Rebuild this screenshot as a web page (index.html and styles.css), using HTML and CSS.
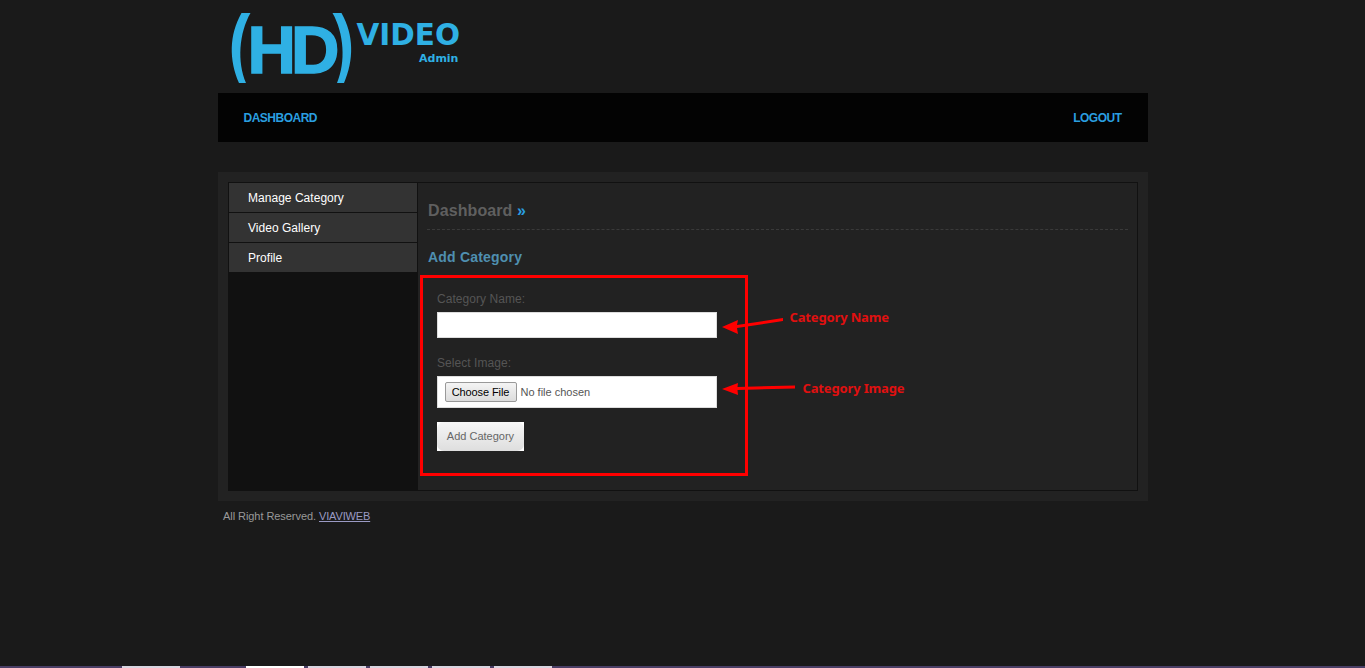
FILE: index.html
```html
<!DOCTYPE html>
<html lang="en">
<head>
  <meta charset="UTF-8">
  <title>Add Category</title>
  <meta name="viewport" content="width=device-width, initial-scale=1.0">
  <link rel="stylesheet" href="styles.css">
</head>
<body>

<div class="container">
  <div class="header">
    <svg class="logo" width="260" height="93" viewBox="0 0 260 93">
      <path d="M23.5 13H32.5C21 33 19 62 28 83H21C11 60 11 35 23.5 13Z"/>
      <path d="M123.500 13H114.500C126 33 128 62 119 83H126C136 60 136 35 123.500 13Z"/>
      <text class="logo-hd" x="29.500" y="73">HD</text>
      <text class="logo-video" x="138.500" y="44.500">VIDEO</text>
      <text class="logo-admin" x="201" y="62">Admin</text>
    </svg>
  </div>

  <div class="nav">
    <a href="#">DASHBOARD</a>
    <a href="#">LOGOUT</a>
  </div>

  <div class="main">
    <div class="inner">
      <ul class="sidebar">
        <li><a href="#">Manage Category</a></li>
        <li><a href="#">Video Gallery</a></li>
        <li><a href="#">Profile</a></li>
      </ul>

      <div class="content">
        <h2>Dashboard <span>»</span></h2>
        <h3>Add Category</h3>

        <form class="form">
          <label for="catName">Category Name:</label>
          <input type="text" id="catName" class="field">

          <label for="catImage" class="second">Select Image:</label>
          <div class="field file-field">
            <input type="file" id="catImage">
          </div>

          <button type="button" class="submit"><span>Add Category</span></button>

          <!-- annotations drawn over the form -->
          <svg class="arrows" width="90" height="80" viewBox="0 0 90 80">
            <path d="M0 11L16 4L15 9L61 2V5L15 12L16 18Z"/>
            <path d="M0 73L16 67L15.500 71L73 69.500V72.500L15.500 74L16 79Z"/>
          </svg>
          <span class="note note-name">Category Name</span>
          <span class="note note-image">Category Image</span>
        </form>
      </div>
    </div>
  </div>

  <p class="footer">All Right Reserved. <a href="#">VIAVIWEB</a></p>
</div>

<div class="taskbar">
  <span class="tab tab1"></span>
  <span class="tab tab2"></span>
  <span class="tab tab3"></span>
  <span class="tab tab4"></span>
  <span class="tab tab5"></span>
  <span class="tab tab6"></span>
</div>

</body>
</html>
```

FILE: styles.css
```css
* {
  box-sizing: border-box;
  font-family: "Liberation Sans", Arial, sans-serif;
}
html, body {
  height: 100%;
}
body {
  margin: 0;
  padding: 0;
  background: #1a1a1a;
  display: flex;
  flex-direction: column;
}
.container {
  width: 930px;
  margin: 0 auto;
  flex: 1;
}
.header {
  height: 93px;
}
.logo {
  display: block;
  fill: #2fb0e4;
}
.logo-hd {
  font-size: 67px;
  font-weight: bold;
  letter-spacing: -5px;
  stroke: #2fb0e4;
  stroke-width: 1.500px;
}
.logo-video {
  font-family: "DejaVu Sans", sans-serif;
  font-size: 29.500px;
  font-weight: bold;
}
.logo-admin {
  font-family: "DejaVu Sans", sans-serif;
  font-size: 11px;
  font-weight: bold;
}
.nav {
  height: 49px;
  background: #030303;
  padding: 0 26px;
  display: flex;
  justify-content: space-between;
  align-items: center;
}
.nav a {
  color: #2a9fe0;
  font-size: 12px;
  font-weight: bold;
  letter-spacing: -0.5px;
  text-decoration: none;
}
.main {
  margin-top: 30px;
  background: #222;
  padding: 10px;
}
.inner {
  display: flex;
  height: 309px;
  border: 1px solid #111;
}
.sidebar {
  width: 189px;
  margin: 0;
  padding: 0;
  list-style: none;
  background: #111;
  border-right: 1px solid #111;
}
.sidebar li {
  height: 30px;
  background: #333;
  border-bottom: 1px solid #111;
}
.sidebar li:last-child {
  height: 29px;
  border-bottom: none;
}
.sidebar a {
  display: block;
  padding-left: 19.500px;
  line-height: 30px;
  color: #fff;
  font-size: 12px;
  letter-spacing: 0.03px;
  text-decoration: none;
}
.content {
  flex: 1;
  padding: 0 9px;
  background: #222;
}
.content h2 {
  margin: 0;
  height: 47px;
  padding: 19px 0 0 1.500px;
  border-bottom: 1px dashed #3a3a3a;
  color: #5f5f5f;
  font-size: 16px;
  letter-spacing: 0.1px;
  line-height: 18px;
}
.content h2 span {
  color: #2a9fe0;
}
.content h3 {
  margin: 19px 0 10px 1.500px;
  color: #4f8fb0;
  font-size: 14px;
  letter-spacing: 0.2px;
  line-height: 16px;
}
.form {
  position: relative;
  width: 328px;
  height: 201px;
  margin-left: -7px;
  padding: 13px 14px 0;
  border: 3px solid #f00;
}
.form label {
  display: block;
  height: 21px;
  padding-left: 0.500px;
  color: #555;
  font-size: 12px;
  letter-spacing: 0.05px;
  line-height: 16px;
}
.form .second {
  margin-top: 17px;
}
.field {
  display: block;
  width: 280px;
  height: 26px;
  margin-top: 0;
  background: #fff;
  border: 1px solid #ddd;
  border-radius: 0;
}
.file-field {
  height: 32px;
  padding: 5px 7px;
}
.file-field input {
  display: block;
  width: 260px;
  font-size: 11px;
  color: #555;
}
.file-field input::file-selector-button {
  width: 72px;
  height: 20px;
  margin-right: 4px;
  padding: 0;
  color: #000;
  font-size: 11px;
  letter-spacing: -0.1px;
  background: linear-gradient(#f4f4f4, #dcdcdc);
  border: 1px solid #999;
  border-radius: 2px;
}
.submit {
  display: block;
  width: 87px;
  height: 29px;
  margin-top: 14px;
  padding: 0;
  background: #fff;
  border: none;
}
.submit span {
  display: block;
  height: 29px;
  padding-left: 1px;
  color: #666;
  font-size: 11px;
  line-height: 28px;
  background: linear-gradient(#f6f6f6, #dedede);
  border-radius: 7px;
}
.arrows {
  position: absolute;
  left: 299px;
  top: 38px;
  fill: #f00;
}
.note {
  position: absolute;
  color: #e01010;
  font-family: "Noto Sans", sans-serif;
  font-size: 13px;
  font-weight: bold;
  letter-spacing: -0.15px;
  line-height: 16px;
  white-space: nowrap;
}
.note-name {
  left: 367px;
  top: 31px;
}
.note-image {
  left: 380px;
  top: 102px;
}
.footer {
  margin: 9px 0 0 5.500px;
  color: #999;
  font-size: 11px;
  letter-spacing: -0.06px;
  line-height: 13px;
}
.footer a {
  color: #9a9ac4;
  letter-spacing: -0.15px;
}
.taskbar {
  height: 2px;
  flex: none;
  display: flex;
  background: #4a3f66;
  overflow: hidden;
}
.tab {
  width: 58px;
  height: 2px;
  background: #d8d4e0;
}
.tab1 { margin-left: 122px; }
.tab2 { margin-left: 66px; background: #fff; }
.tab3 { margin-left: 4px; }
.tab4 { margin-left: 4px; }
.tab5 { margin-left: 4px; }
.tab6 { margin-left: 4px; }
```
